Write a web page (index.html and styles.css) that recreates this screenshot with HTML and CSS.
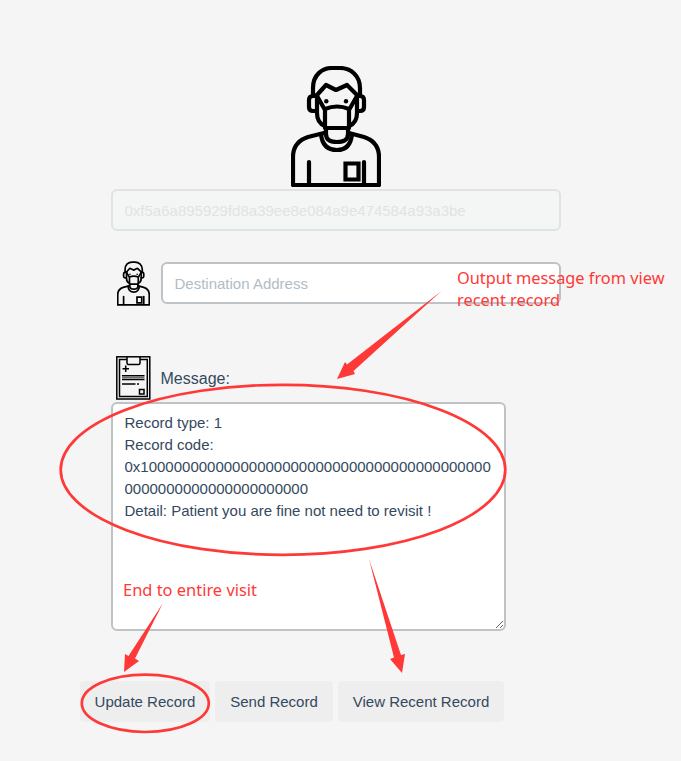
FILE: index.html
```html
<!DOCTYPE html>
<html lang="en">
<head>
<meta charset="utf-8">
<title>Patient Record</title>
<link rel="stylesheet" href="styles.css">
</head>
<body>
<svg class="sprite" aria-hidden="true">
  <symbol id="patient" viewBox="0 0 90 121">
    <g class="figure" fill="none" stroke="#000" stroke-linejoin="round" stroke-linecap="round">
      <path d="M22 29V22C22 9 31 2 41 2H49C60 2 69 10 69 22V29"/>
      <path d="M25 30H22Q18 30 18 34V41Q18 45 22 45H25M66 30H69Q73 30 73 34V41Q73 45 69 45H66"/>
      <path d="M26 29L35 19L45 24L56 19L66 29"/>
      <path d="M26 29V47Q26 57 34 60M66 29V47Q66 57 58 60"/>
      <path d="M26 30L34 44M66 30L58 44M34 43Q46 38 58 43V62H34Z"/>
      <path d="M35 63V68Q35 76 46 76Q57 76 57 68V63"/>
      <path d="M30 68C31 79 37 84 46 84S60 79 61 68"/>
      <path d="M33 67L17 71Q2 76 2 91V119H88V91Q88 76 73 71L58 67"/>
      <path d="M18 96V118M73 96V118"/>
      <path d="M54.5 97.5H67.5V113.500H54.500Z" stroke-linejoin="miter"/>
    </g>
    <circle cx="35.300" cy="35.300" r="2.200"/><circle cx="55" cy="35.300" r="2.200"/>
  </symbol>
</svg>
<main class="page">
  <svg class="avatar"><use href="#patient"/></svg>
  <input class="field sender" value="0xf5a6a895929fd8a39ee8e084a9e474584a93a3be" disabled>
  <div class="row destination">
    <svg class="small-avatar"><use href="#patient"/></svg>
    <input class="field" placeholder="Destination Address">
  </div>
  <div class="row message-label">
    <svg class="clipboard" viewBox="0 0 35 44" fill="none" stroke="#000" stroke-width="1.500">
      <rect x=".8" y=".8" width="33" height="42.200"/>
      <path d="M11 3.500H3.500V40.500H31.300V3.500H24"/>
      <path d="M11 1V7Q11 8.500 12.500 8.500H22.500Q24 8.500 24 7V1"/>
      <path d="M6.500 12.700H13M9.700 9.500V16"/>
      <path d="M6 19.800H28.500M6 23.500H28.500M6 28H19.500M21 28H23"/>
      <path d="M6 21.700H28.500" stroke-width=".7"/>
      <rect x="23.500" y="33.500" width="4.500" height="4.500"/>
    </svg>
    <label for="message">Message:</label>
  </div>
  <textarea class="field message" id="message" spellcheck="false">Record type: 1
Record code: 0x1000000000000000000000000000000000000000000000000000000000000000
Detail: Patient you are fine not need to revisit !</textarea>
  <div class="actions">
    <button class="btn update">Update Record</button>
    <button class="btn send">Send Record</button>
    <button class="btn view">View Recent Record</button>
  </div>
</main>
<svg class="annotations" viewBox="0 0 681 761">
  <g fill="none" stroke="#ff3838" stroke-width="2.700">
    <ellipse cx="283" cy="469.800" rx="222.300" ry="85"/>
    <ellipse cx="145.300" cy="703.300" rx="63.500" ry="28.700"/>
  </g>
  <g fill="#ff3838">
    <path d="M441.500 291L353.500 371L355 374L337 379L345 362L347 364.500Z"/>
    <path d="M163 603L135 658.500L139 661L124 672L125 654L128.500 656Z"/>
    <path d="M369 559L401 655L405 654L402 673L390 659L394 657.500Z"/>
    <text x="457" y="284" textLength="207.500" lengthAdjust="spacingAndGlyphs">Output message from view</text>
    <text x="457" y="306" textLength="103" lengthAdjust="spacingAndGlyphs">recent record</text>
    <text x="123" y="596" textLength="134" lengthAdjust="spacingAndGlyphs">End to entire visit</text>
  </g>
</svg>
</body>
</html>
```
FILE: styles.css
```css
* { box-sizing: border-box; }
body {
  margin: 0;
  background: #f5f5f5;
  color: #34495e;
  font: 15px/22px "Liberation Sans", Arial, sans-serif;
}
.sprite { display: none; }
.figure { stroke-width: var(--line, 4.2px); }
.page {
  display: flex;
  flex-direction: column;
  width: 450px;
  margin-left: 111px;
  padding-top: 66px;
}
.avatar { width: 90px; height: 121px; margin-left: 180px; }
.field {
  display: block;
  width: 100%;
  height: 42px;
  padding: 8px 11.5px;
  border: 2px solid #bdc3c7;
  border-radius: 6px;
  background: #fff;
  color: #34495e;
  font: inherit;
  outline: 0;
}
.field::placeholder { color: #b2bcc5; opacity: 1; }
.sender {
  margin-top: 2px;
  border-color: #dfe3e3;
  background: #f4f6f6;
  color: #dfe3e4;
}
.row { display: flex; }
.destination { margin-top: 31px; }
.destination .field { flex: 1; min-width: 0; }
.small-avatar { --line: 4.6px; flex: none; width: 33px; height: 45px; margin: -1px 11px -2px 6px; }
.message-label { align-items: center; height: 44px; margin-top: 52px; font-size: 16px; }
.message-label label { padding-top: 2px; }
.clipboard { flex: none; width: 35px; height: 44px; margin: 0 9.5px 0 5px; }
.message {
  width: 395px;
  height: 229px;
  margin-top: 2px;
  overflow: hidden;
  overflow-wrap: break-word;
  resize: both;
}
.actions { display: flex; gap: 5px; margin: 50px 0 0 -31px; }
.btn {
  height: 41px;
  padding: 0;
  border: 0;
  border-radius: 4px;
  background: #eee;
  color: #34495e;
  font: inherit;
}
.update { width: 130px; }
.send { width: 118px; }
.view { width: 166px; }
.annotations {
  position: absolute;
  top: 0;
  left: 0;
  width: 681px;
  height: 761px;
  pointer-events: none;
  font: 16.5px "Noto Sans", "Open Sans", sans-serif;
}
```
